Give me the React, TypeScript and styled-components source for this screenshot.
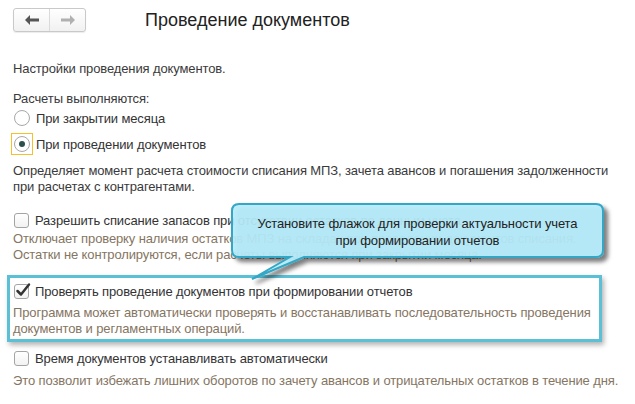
import React from "react";
import styled, { createGlobalStyle } from "styled-components";

const Global = createGlobalStyle`
  html, body { margin: 0; padding: 0; background: #fff; }
  body { font-family: "Liberation Sans", Arial, sans-serif; font-size: 13px; color: #333; }
`;

const Page = styled.div`
  position: relative;
  width: 635px;
  height: 404px;
  overflow: hidden;
  background: #fff;
`;

const Header = styled.div`
  display: flex;
  align-items: center;
  height: 40px;
  padding: 0 13px;
  box-sizing: border-box;
`;

const NavGroup = styled.div`
  display: flex;
  width: 73px;
  height: 24px;
  box-sizing: border-box;
  border: 1px solid #c9c9c9;
  border-radius: 3px;
  background: linear-gradient(#ffffff, #f1f1f1);
  box-shadow: 0 1px 1px rgba(0, 0, 0, 0.08);
`;

const NavButton = styled.div<{ $first?: boolean }>`
  flex: 1;
  display: flex;
  align-items: center;
  justify-content: center;
  border-right: ${(p) => (p.$first ? "1px solid #dadada" : "none")};
`;

const Title = styled.h1`
  margin: 0 0 0 59px;
  font-size: 18px;
  font-weight: normal;
  color: #222;
`;

const Content = styled.div`
  display: flex;
  flex-direction: column;
  padding: 0 13px;
  letter-spacing: -0.12px;
`;

const Text = styled.div<{ $top?: number; $hint?: boolean }>`
  margin-top: ${(p) => p.$top ?? 0}px;
  line-height: 16px;
  white-space: nowrap;
  color: ${(p) => (p.$hint ? "#857562" : "#3a3a3a")};
`;

const Row = styled.div<{ $top?: number }>`
  display: flex;
  align-items: center;
  height: 22px;
  margin-top: ${(p) => p.$top ?? 0}px;
  white-space: nowrap;
  color: #333;
`;

const Focus = styled.div<{ $on?: boolean }>`
  display: flex;
  align-items: center;
  justify-content: center;
  width: 22px;
  height: 22px;
  margin-left: -2px;
  box-sizing: border-box;
  border: 1px solid ${(p) => (p.$on ? "#f5c02a" : "transparent")};
`;

const Radio = styled.div<{ $checked?: boolean }>`
  width: 16px;
  height: 16px;
  box-sizing: border-box;
  border-radius: 50%;
  border: 1px solid #a8a8a8;
  background: radial-gradient(circle, #fff 60%, #f0f0f0);
  display: flex;
  align-items: center;
  justify-content: center;
  &::after {
    content: "";
    display: ${(p) => (p.$checked ? "block" : "none")};
    width: 6px;
    height: 6px;
    border-radius: 50%;
    background: #2f4f4f;
  }
`;

const Box = styled.div`
  width: 15px;
  height: 15px;
  margin-left: 1px;
  flex: none;
  box-sizing: border-box;
  border: 1px solid #a4a4a4;
  border-radius: 3px;
  background: linear-gradient(#ffffff, #f2f2f2);
  position: relative;
`;

const Label = styled.span<{ $gap?: number }>`
  margin-left: ${(p) => p.$gap ?? 6}px;
`;

const Frame = styled.div`
  margin: 12px 0 0 -6px;
  width: 595px;
  box-sizing: border-box;
  border: 3px solid #5bbfd5;
  padding: 2px 0 2px 3px;
  box-shadow: 2px 3px 5px rgba(0, 0, 0, 0.3);
`;

const Callout = styled.div`
  position: absolute;
  left: 232px;
  top: 204px;
  width: 371px;
  height: 53px;
`;

const CalloutShape = styled.svg`
  position: absolute;
  left: -4px;
  top: -4px;
  overflow: visible;
`;

const CalloutText = styled.div`
  position: absolute;
  left: 0;
  top: 0;
  width: 371px;
  height: 53px;
  display: flex;
  flex-direction: column;
  justify-content: center;
  align-items: center;
  line-height: 17px;
  color: #222;
  padding-top: 2px;
  box-sizing: border-box;
  letter-spacing: -0.12px;
`;

const CheckMark = styled.svg`
  position: absolute;
  left: 0;
  top: -3px;
`;

const ArrowLeft = ({ color }: { color: string }) => (
  <svg width="14" height="10" viewBox="0 0 14 10">
    <path d="M5 0 L0 5 L5 10 Z" fill={color} />
    <rect x="4" y="3.5" width="10" height="3" fill={color} />
  </svg>
);

const ArrowRight = ({ color }: { color: string }) => (
  <svg width="14" height="10" viewBox="0 0 14 10">
    <path d="M9 0 L14 5 L9 10 Z" fill={color} />
    <rect x="0" y="3.5" width="10" height="3" fill={color} />
  </svg>
);

const Check = () => (
  <CheckMark width="16" height="16" viewBox="0 0 16 16">
    <path d="M2.5 9 L6 12.5 L14 2.5" fill="none" stroke="#333" strokeWidth="2.5" strokeLinecap="round" strokeLinejoin="round" />
  </CheckMark>
);

export default function App() {
  const w = 371;
  const h = 53;
  const r = 7;
  const path = `M${r} 0 H${w - r} Q${w} 0 ${w} ${r} V${h - r} Q${w} ${h} ${w - r} ${h} H72 L20 75 L58 ${h} H${r} Q0 ${h} 0 ${h - r} V${r} Q0 0 ${r} 0 Z`;
  return (
    <Page>
      <Global />
      <Header>
        <NavGroup>
          <NavButton $first>
            <ArrowLeft color="#555" />
          </NavButton>
          <NavButton>
            <ArrowRight color="#b0b0b0" />
          </NavButton>
        </NavGroup>
        <Title>Проведение документов</Title>
      </Header>
      <Content>
        <Text $top={21}>Настройки проведения документов.</Text>
        <Text $top={14}>Расчеты выполняются:</Text>
        <Row>
          <Focus>
            <Radio />
          </Focus>
          <Label $gap={3}>При закрытии месяца</Label>
        </Row>
        <Row $top={4}>
          <Focus $on>
            <Radio $checked />
          </Focus>
          <Label $gap={3}>При проведении документов</Label>
        </Row>
        <Text $top={8}>
          Определяет момент расчета стоимости списания МПЗ, зачета авансов и погашения задолженности
          <br />
          при расчетах с контрагентами.
        </Text>
        <Row $top={14}>
          <Box />
          <Label>Разрешить списание запасов при отсутствии остатков по данным учета</Label>
        </Row>
        <Text $hint>
          Отключает проверку наличия остатков МПЗ на складах при проведении документов списания.
          <br />
          Остатки не контролируются, если расчеты выполняются при закрытии месяца.
        </Text>
        <Frame>
          <Row>
            <Box>
              <Check />
            </Box>
            <Label>Проверять проведение документов при формировании отчетов</Label>
          </Row>
          <Text $top={3} $hint>
            Программа может автоматически проверять и восстанавливать последовательность проведения
            <br />
            документов и регламентных операций.
          </Text>
        </Frame>
        <Row $top={5}>
          <Box />
          <Label>Время документов устанавливать автоматически</Label>
        </Row>
        <Text $top={4} $hint>
          Это позволит избежать лишних оборотов по зачету авансов и отрицательных остатков в течение дня.
        </Text>
      </Content>
      <Callout>
        <CalloutShape width={w + 12} height={90} viewBox={`-4 -4 ${w + 12} 90`}>
          <defs>
            <filter id="sh" x="-10%" y="-20%" width="130%" height="160%">
              <feDropShadow dx="4" dy="4" stdDeviation="2" floodColor="#000" floodOpacity="0.55" />
            </filter>
          </defs>
          <path d={path} fill="rgba(182, 236, 251, 0.9)" stroke="#35a7c6" strokeWidth="2" filter="url(#sh)" />
        </CalloutShape>
        <CalloutText>
          <div>Установите флажок для проверки актуальности учета</div>
          <div>при формировании отчетов</div>
        </CalloutText>
      </Callout>
    </Page>
  );
}
